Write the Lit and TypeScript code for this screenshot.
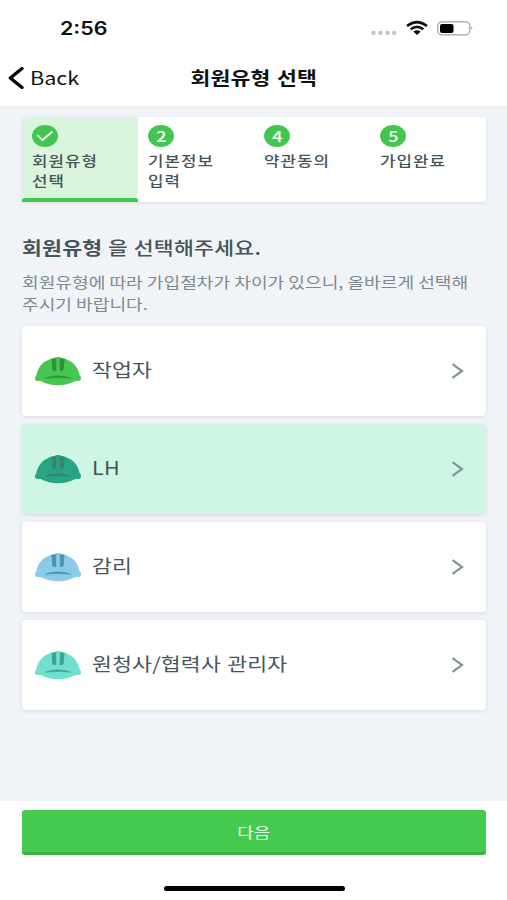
import { LitElement, html, css, svg } from "lit";
import { customElement, property, state } from "lit/decorators.js";

type Tone = { body: string; dark: string };

const USER_TYPES: { label: string; tone: Tone }[] = [
  { label: "작업자", tone: { body: "#44c84f", dark: "#2f9140" } },
  { label: "LH", tone: { body: "#27a482", dark: "#398370" } },
  { label: "감리", tone: { body: "#8ccae9", dark: "#4c93b5" } },
  { label: "원청사/협력사 관리자", tone: { body: "#72e0cf", dark: "#42a394" } },
];

const STEPS = [
  { mark: "", lines: ["회원유형", "선택"] },
  { mark: "2", lines: ["기본정보", "입력"] },
  { mark: "4", lines: ["약관동의"] },
  { mark: "5", lines: ["가입완료"] },
];

@customElement("helmet-icon")
class HelmetIcon extends LitElement {
  @property({ attribute: false }) tone: Tone = USER_TYPES[0].tone;
  static styles = css`
    :host { display: block; width: 48px; height: 30px; }
    svg { display: block; }
  `;
  render() {
    const { body, dark } = this.tone;
    return html`<svg width="48" height="30" viewBox="0 0 48 30">
      ${svg`
        <path fill=${body} d="M2.200 19.800C4 9.800 10.500 3.800 20.500 2C22 .6 26 .6 27.500 2C37.500 3.800 44 9.800 45.800 19.800C47.500 20.400 47.700 24.600 45 24.900L41.500 24.900C31 30.600 17 30.600 6.500 24.900L3 24.900C.3 24.600 .5 20.400 2.200 19.800Z"/>
        <path fill=${dark} d="M17.500 2.800L22.200 2.300V15H20.500Q18.500 14.800 18.200 13ZM25.800 2.300L30.500 2.800L29.800 13Q29.500 14.800 27.500 15H25.800Z"/>
        <path fill=${dark} d="M11 22.200Q24 17.400 37 22.200Q24 20.700 11 22.200Z" stroke=${dark} stroke-width=".5"/>
      `}
    </svg>`;
  }
}

@customElement("app-root")
class AppRoot extends LitElement {
  @state() selected = 1;

  static styles = css`
    :host {
      display: flex; flex-direction: column; height: 900px; width: 507px;
      background: #fff; overflow: hidden; color: #46555a;
      font-family: "Noto Sans CJK KR", "Noto Sans", sans-serif;
    }
    * { box-sizing: border-box; }
    svg { display: block; flex: none; }
    .wide { display: inline-block; white-space: nowrap; transform: scaleX(1.2); transform-origin: 0 50%; }
    .center { transform-origin: 50% 50%; }
    .status {
      height: 56px; padding: 0 33px 0 60px; display: flex;
      align-items: center; justify-content: space-between;
      font: 600 18px/56px "Inter", sans-serif; color: #111;
    }
    .time { transform: scaleX(1.19); padding-top: 2px; }
    .nav {
      height: 50px; display: grid; grid-template-columns: 1fr auto 1fr;
      align-items: center; padding: 0 0 6px; color: #111;
    }
    .back { display: flex; align-items: center; gap: 6px; padding-left: 8px; font-size: 18px; line-height: 40px; }
    .back .wide { padding-bottom: 2px; }
    .title { font-size: 18px; font-weight: 700; line-height: 40px; word-spacing: 1px; letter-spacing: .15px; padding-bottom: 2px; }
    main {
      height: 695px; padding: 11px 21px 0 22px; background: #f0f4f8;
      border-top: 1px solid #e8edef; display: flex; flex-direction: column;
    }
    .steps {
      display: grid; grid-template-columns: repeat(4, 1fr); height: 85px; flex: none;
      background: #fff; border-radius: 3px; box-shadow: 0 1px 3px #0000001a; margin-top: -1px;
    }
    .step { padding: 8px 0 0 10px; }
    .step.on {
      background: #daf4dd;
      border-radius: 3px 0 0 0; display: flex; flex-direction: column;
    }
    .step.on::after {
      content: ""; height: 4px; margin: auto 0 0 -10px; background: #43c650; border-radius: 3px 3px 0 0;
    }
    .mark {
      width: 26px; height: 22px; border-radius: 50%; background: #43c650; color: #fff;
      display: flex; align-items: center; justify-content: center;
      font-size: 15px; line-height: 22px; font-weight: 500;
    }
    .mark .wide { padding-bottom: 1px; }
    .label {
      display: block; width: max-content; font-size: 14px; font-weight: 500; line-height: 20px;
      letter-spacing: .85px;
    }
    .labels { padding-top: 3px; }
    h1 { margin: 31px 0 0; font-size: 18px; line-height: 28px; font-weight: 500; height: 28px; letter-spacing: .2px; word-spacing: .4px; }
    h1 b { font-weight: 700; }
    .desc { margin: 10px 0 0; font-size: 15px; line-height: 22px; color: #7f898d; height: 43px; }
    .desc .wide { transform: scaleX(1.208); }
    .list { display: flex; flex-direction: column; gap: 8px; margin-top: 12px; }
    .card {
      height: 90px; flex: none; background: #fff; border-radius: 4px; box-shadow: 0 1px 4px #0000001a;
      display: flex; align-items: center; padding: 0 22px 0 12px; font-size: 18px;
    }
    .card.on { background: #cff5e4; }
    .name { flex: 1; margin-left: 10px; line-height: 28px; padding-bottom: 4px; letter-spacing: .15px; word-spacing: 1px; }
    footer {
      flex: 1; padding: 9px 21px 0 22px; display: flex; flex-direction: column; align-items: stretch;
    }
    .next {
      height: 45px; border-radius: 3px; background: #45c94f; border-bottom: 3px solid #3cb047;
      color: #e8fbe9; font-size: 15px; line-height: 43px; text-align: center;
    }
    .home { width: 181px; height: 5px; border-radius: 3px; background: #000; margin: 31px 0 0 142px; }
  `;

  render() {
    return html`
      <div class="status">
        <span class="wide time">2:56</span>
        <svg width="104" height="20" viewBox="0 0 104 20">
          <g fill="#c4c4c4"><circle cx="3.500" cy="15" r="2.200"/><circle cx="10.500" cy="15" r="2.200"/><circle cx="17.500" cy="15" r="2.200"/><circle cx="24.200" cy="15" r="2.200"/></g>
          <g fill="none" stroke="#111" stroke-width="2.700">
            <path d="M37 8Q47 .2 57 8"/><path d="M40.700 11.300Q47 6.400 53.300 11.300"/>
          </g>
          <path fill="#111" d="M43.300 13.600Q47 10.800 50.700 13.600L47 17Z"/>
          <rect x="67.800" y="3.800" width="32" height="13" rx="4" fill="none" stroke="#a5a5a5" stroke-width="1.300"/>
          <rect x="70" y="6" width="13.500" height="9" rx="2" fill="#000"/>
          <path fill="#999" d="M101.300 8.500Q103.300 10.200 101.300 12Z"/>
        </svg>
      </div>
      <div class="nav">
        <div class="back">
          <svg width="16" height="22" viewBox="0 0 16 22"><path d="M14 1.500L2.300 11L14 20.500" fill="none" stroke="#000" stroke-width="3.300" stroke-linecap="round" stroke-linejoin="round"/></svg>
          <span class="wide">Back</span>
        </div>
        <span class="wide center title">회원유형 선택</span>
        <span></span>
      </div>
      <main>
        <div class="steps">
          ${STEPS.map((s, i) => html`<div class="step ${i === 0 ? "on" : ""}">
            <div class="mark">${s.mark
              ? html`<span class="wide center">${s.mark}</span>`
              : html`<svg width="18" height="12" viewBox="0 0 18 12"><path d="M1.200 5L6.500 10L16.500 1.500" fill="none" stroke="#fff" stroke-width="1.700"/></svg>`}</div>
            <div class="labels">${s.lines.map((l) => html`<span class="wide label">${l}</span>`)}</div>
          </div>`)}
        </div>
        <h1><span class="wide"><b>회원유형</b> 을 선택해주세요.</span></h1>
        <p class="desc"><span class="wide">회원유형에 따라 가입절차가 차이가 있으니, 올바르게 선택해<br>주시기 바랍니다.</span></p>
        <div class="list">
          ${USER_TYPES.map((t, i) => html`<div class="card ${i === this.selected ? "on" : ""}" @click=${() => (this.selected = i)}>
            <helmet-icon .tone=${t.tone}></helmet-icon>
            <span class="name"><span class="wide">${t.label}</span></span>
            <svg width="13" height="16" viewBox="0 0 13 16"><path d="M1.500 1.200L11 8L1.500 14.800" fill="none" stroke="#7f9896" stroke-width="2.200"/></svg>
          </div>`)}
        </div>
      </main>
      <footer>
        <div class="next"><span class="wide center">다음</span></div>
        <div class="home"></div>
      </footer>
    `;
  }
}
